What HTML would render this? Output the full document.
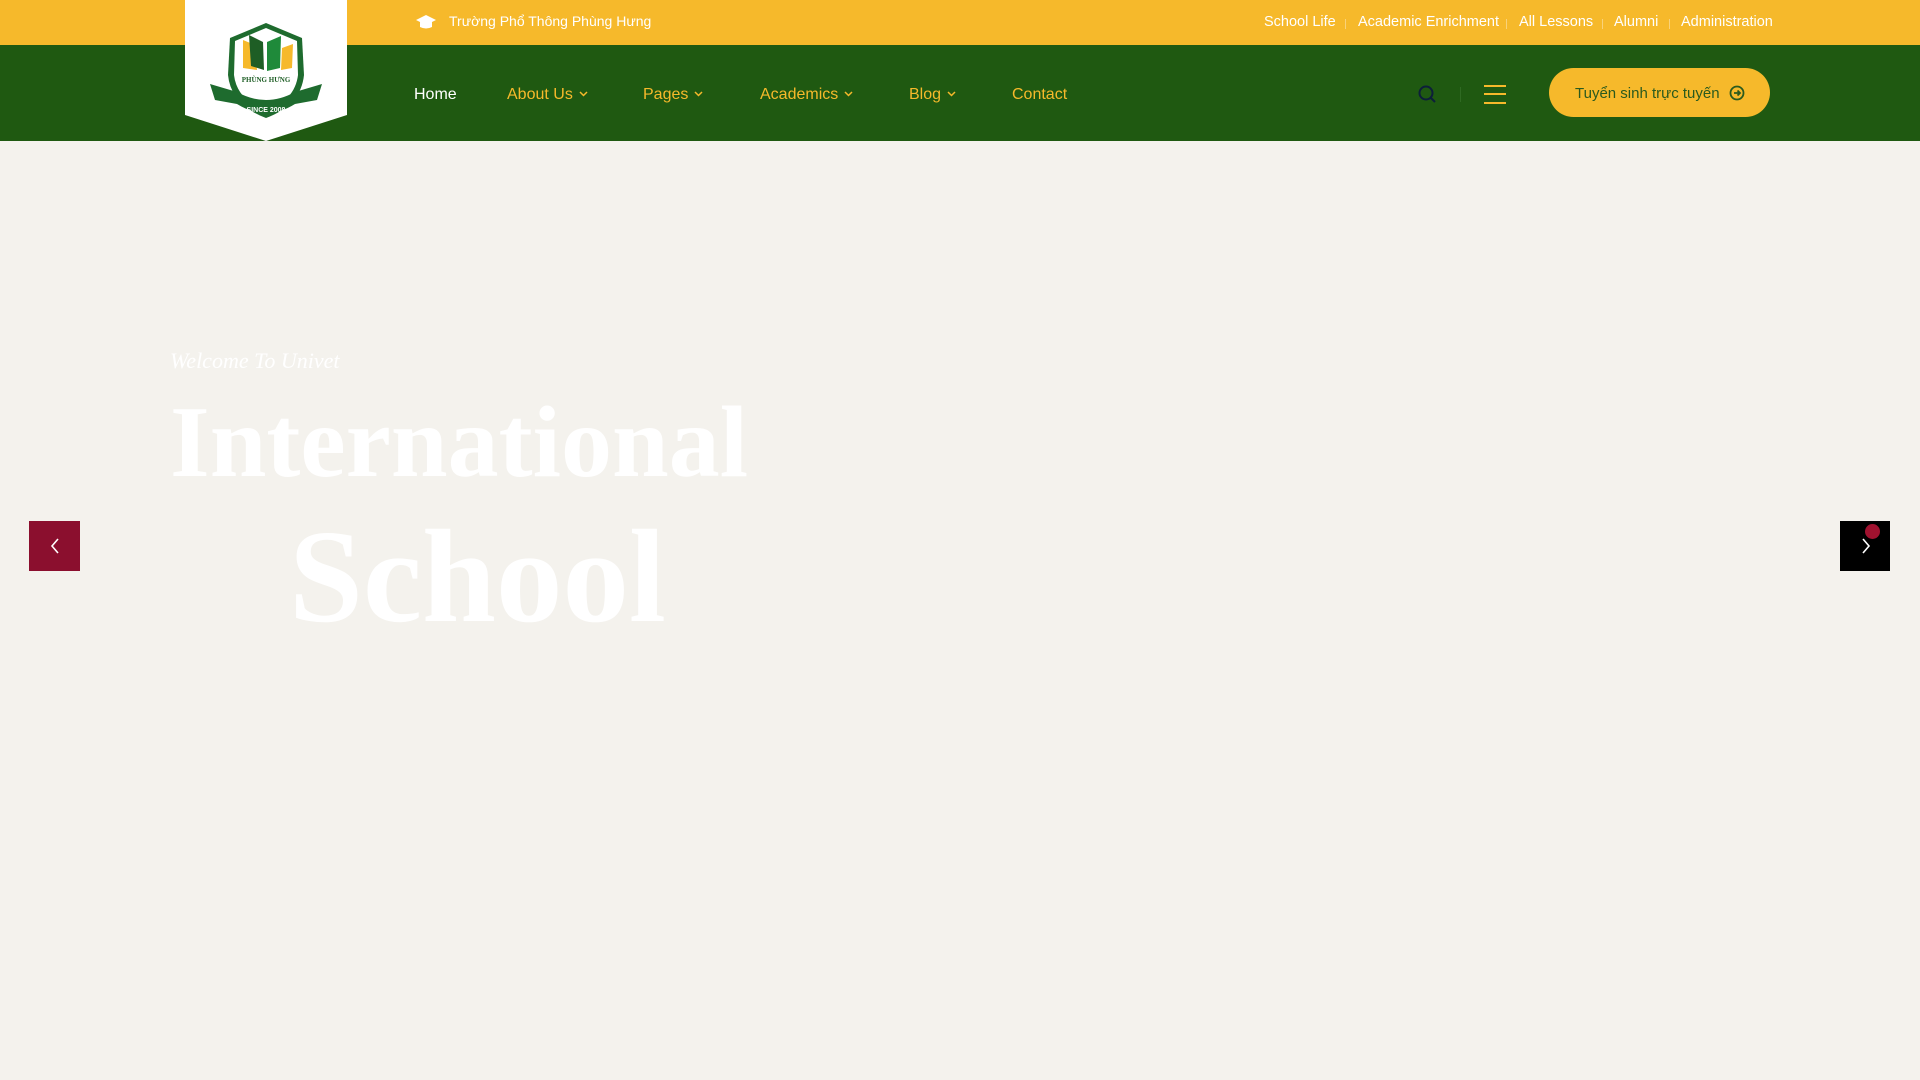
<!DOCTYPE html>
<html><head><meta charset="utf-8"><style>
*{margin:0;padding:0;box-sizing:border-box}
body{width:1920px;height:1080px;overflow:hidden;background:#f4f2ed;font-family:"Liberation Sans","Noto Sans CJK SC",sans-serif;position:relative}
.top{position:absolute;left:0;top:0;width:1920px;height:45px;background:#f6b92b}
.nav{position:absolute;left:0;top:45px;width:1920px;height:96px;background:#1f5911}
.t{position:absolute;white-space:nowrap}
.tl{top:14px;font-size:14.5px;color:#fff}
.sep{position:absolute;top:19px;width:1px;height:10px;background:#f9d27a}
.n{top:86px;font-size:16px;color:#f6b92b}
.n svg{margin-left:6px;vertical-align:2px}
</style></head><body>
<div class="top"></div><div class="nav"></div>
<svg style="position:absolute;left:185px;top:0" width="162" height="141" viewBox="0 0 162 141">
<polygon points="0,0 162,0 162,115 81,141 0,115" fill="#fff"/>
<path d="M45,38 L81,23 L117,38 L119,75 Q116,105 81,118 Q46,105 43,75 Z" fill="#1e6b2e"/>
<path d="M50,41 L81,28 L112,41 L113,75 Q110,100 81,111 Q52,100 49,75 Z" fill="#fff"/>
<path d="M58,40 L70,45 L72,70 L58,68Z" fill="#f6b92b"/>
<path d="M64,35 L78,42 L79,70 L66,66Z" fill="#1e5e25"/>
<path d="M82,42 L96,36 L95,68 L82,71Z" fill="#1f8a3a"/>
<path d="M97,48 L108,44 L107,68 L96,70Z" fill="#f6b92b"/>
<text x="81" y="82" font-size="7" text-anchor="middle" fill="#1e5e25" font-family="Liberation Serif" font-weight="bold">PHÙNG HƯNG</text>
<path d="M25,84 L52,92 Q81,108 110,92 L137,84 L132,100 L110,104 Q81,122 52,104 L30,100Z" fill="#1e6b2e"/>
<text x="81" y="112" font-size="7" text-anchor="middle" fill="#fff" font-weight="bold">SINCE 2008</text>
</svg>
<svg style="position:absolute;left:415px;top:14px" width="22" height="16" viewBox="0 0 22 16"><path d="M11,1 L21,6 L11,11 L1,6Z M5,8 L5,13 Q11,16 17,13 L17,8 L11,11Z" fill="#fff"/></svg>
<div class="t tl" style="left:449px;top:13px;font-size:14px">Trường Phổ Thông Phùng Hưng</div>
<div class="t tl" style="left:1264px">School Life</div><div class="sep" style="left:1345px"></div>
<div class="t tl" style="left:1358px">Academic Enrichment</div><div class="sep" style="left:1506px"></div>
<div class="t tl" style="left:1519px">All Lessons</div><div class="sep" style="left:1602px"></div>
<div class="t tl" style="left:1614px">Alumni</div><div class="sep" style="left:1669px"></div>
<div class="t tl" style="left:1681px">Administration</div>
<div class="t n" style="left:414px;color:#fff">Home</div>
<div class="t n" style="left:507px">About Us<svg width="9" height="6"><path d="M1,1 L4.5,4.5 L8,1" stroke="#f6b92b" stroke-width="1.5" fill="none"/></svg></div>
<div class="t n" style="left:643px">Pages<svg width="9" height="6"><path d="M1,1 L4.5,4.5 L8,1" stroke="#f6b92b" stroke-width="1.5" fill="none"/></svg></div>
<div class="t n" style="left:760px">Academics<svg width="9" height="6"><path d="M1,1 L4.5,4.5 L8,1" stroke="#f6b92b" stroke-width="1.5" fill="none"/></svg></div>
<div class="t n" style="left:909px">Blog<svg width="9" height="6"><path d="M1,1 L4.5,4.5 L8,1" stroke="#f6b92b" stroke-width="1.5" fill="none"/></svg></div>
<div class="t n" style="left:1012px">Contact</div>
<svg style="position:absolute;left:1418px;top:85px" width="20" height="20"><circle cx="8" cy="8" r="6.5" stroke="#0d1f3a" stroke-width="2" fill="none"/><path d="M13,13 L17,17" stroke="#0d1f3a" stroke-width="2"/></svg>
<div style="position:absolute;left:1460px;top:87px;width:1px;height:15px;background:#2f6a22"></div>
<svg style="position:absolute;left:1484px;top:84px" width="22" height="20"><path d="M0,2H22M0,10H22M0,19H22" stroke="#f6b92b" stroke-width="2"/></svg>
<div style="position:absolute;left:1549px;top:68px;width:221px;height:49px;border-radius:25px;background:#f6b92b"></div>
<div class="t" style="left:1575px;top:85px;font-size:15px;color:#2a5a1e">Tuyển sinh trực tuyến</div>
<svg style="position:absolute;left:1729px;top:85px" width="16" height="16"><circle cx="8" cy="8" r="6.5" stroke="#2a5a1e" stroke-width="1.8" fill="none"/><path d="M5,8H11M8.5,5.5L11,8L8.5,10.5" stroke="#2a5a1e" stroke-width="1.8" fill="none"/></svg>
<div class="t" style="left:170px;top:348px;font-size:22px;font-style:italic;color:#fff;font-family:'Liberation Serif',serif">Welcome To Univet</div>
<div class="t" style="left:170px;top:384px;font-size:102px;line-height:1.15;font-weight:bold;color:#fff;font-family:'Liberation Serif',serif">International</div>
<div class="t" style="left:289px;top:500px;font-size:133px;line-height:1.15;font-weight:bold;color:#fff;font-family:'Liberation Serif',serif">School</div>
<div style="position:absolute;left:29px;top:521px;width:51px;height:50px;background:#8b0f2e"></div>
<svg style="position:absolute;left:50px;top:538px" width="10" height="16"><path d="M8,1L2,8L8,15" stroke="#fff" stroke-width="1.6" fill="none"/></svg>
<div style="position:absolute;left:1840px;top:521px;width:50px;height:50px;background:#000"></div>
<svg style="position:absolute;left:1861px;top:538px" width="10" height="16"><path d="M2,1L8,8L2,15" stroke="#fff" stroke-width="1.6" fill="none"/></svg>
<div style="position:absolute;left:1865px;top:524px;width:15px;height:15px;border-radius:50%;background:#a0122f"></div>
</body></html>
